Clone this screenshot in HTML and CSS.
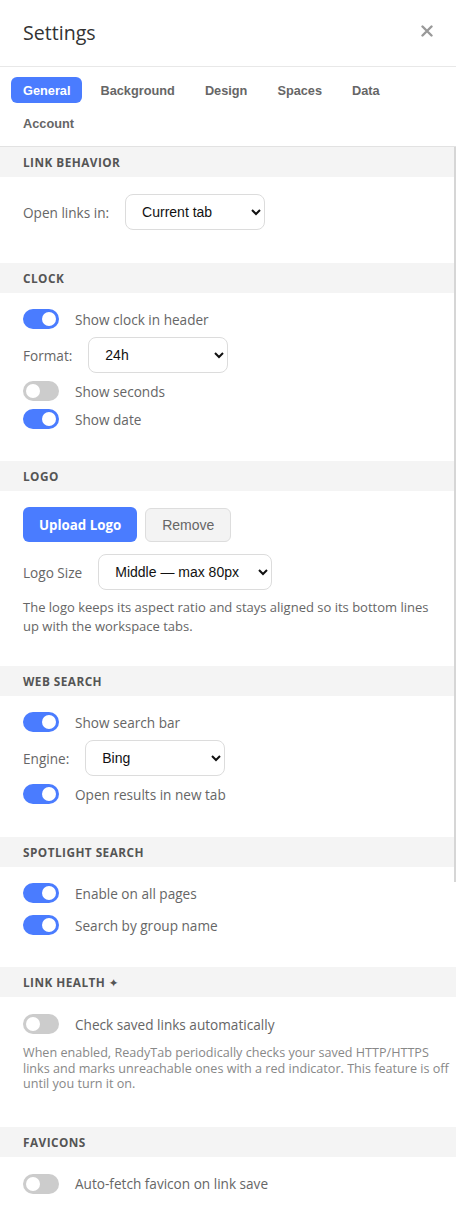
FILE: index.html
```html
<!DOCTYPE html>
<html lang="en">
<head>
<meta charset="utf-8">
<title>Settings</title>
<link rel="stylesheet" href="styles.css">
</head>
<body>
<div class="panel">
  <header class="head">
    <h1 class="title">Settings</h1>
    <button class="close" aria-label="Close">
      <svg width="12" height="12" viewBox="0 0 12 12"><path d="M1.5 1.5 L10.5 10.5 M10.5 1.5 L1.5 10.5" stroke="#999" stroke-width="2.4" stroke-linecap="round" fill="none"/></svg>
    </button>
  </header>

  <nav class="tabs">
    <button class="tab tab--active">General</button>
    <button class="tab">Background</button>
    <button class="tab">Design</button>
    <button class="tab">Spaces</button>
    <button class="tab">Data</button>
    <button class="tab">Account</button>
  </nav>

  <main class="content">
    <section class="sec">
      <h2 class="sec-title">Link Behavior</h2>
      <div class="sec-body sec-body--link">
        <label class="field">
          <span class="field-label">Open links in:</span>
          <select class="select select--std"><option>Current tab</option><option>New tab</option></select>
        </label>
      </div>
    </section>

    <section class="sec">
      <h2 class="sec-title">Clock</h2>
      <div class="sec-body">
        <label class="toggle-row"><span class="toggle toggle--on"></span><span class="toggle-label">Show clock in header</span></label>
        <label class="field">
          <span class="field-label">Format:</span>
          <select class="select select--std"><option>24h</option><option>12h</option></select>
        </label>
        <label class="toggle-row"><span class="toggle"></span><span class="toggle-label">Show seconds</span></label>
        <label class="toggle-row"><span class="toggle toggle--on"></span><span class="toggle-label">Show date</span></label>
      </div>
    </section>

    <section class="sec">
      <h2 class="sec-title">Logo</h2>
      <div class="sec-body sec-body--logo">
        <div class="btn-row">
          <button class="btn btn--primary">Upload Logo</button>
          <button class="btn btn--ghost">Remove</button>
        </div>
        <label class="field field--logo">
          <span class="field-label">Logo Size</span>
          <select class="select select--wide"><option>Middle — max 80px</option></select>
        </label>
        <p class="desc desc--logo">The logo keeps its aspect ratio and stays aligned so its bottom lines<br>up with the workspace tabs.</p>
      </div>
    </section>

    <section class="sec">
      <h2 class="sec-title">Web Search</h2>
      <div class="sec-body sec-body--web">
        <label class="toggle-row"><span class="toggle toggle--on"></span><span class="toggle-label">Show search bar</span></label>
        <label class="field">
          <span class="field-label">Engine:</span>
          <select class="select select--std"><option>Bing</option><option>Google</option></select>
        </label>
        <label class="toggle-row"><span class="toggle toggle--on"></span><span class="toggle-label">Open results in new tab</span></label>
      </div>
    </section>

    <section class="sec">
      <h2 class="sec-title">Spotlight Search</h2>
      <div class="sec-body sec-body--loose">
        <label class="toggle-row"><span class="toggle toggle--on"></span><span class="toggle-label">Enable on all pages</span></label>
        <label class="toggle-row"><span class="toggle toggle--on"></span><span class="toggle-label">Search by group name</span></label>
      </div>
    </section>

    <section class="sec">
      <h2 class="sec-title">Link Health <span class="spark">✦</span></h2>
      <div class="sec-body sec-body--health">
        <label class="toggle-row"><span class="toggle"></span><span class="toggle-label">Check saved links automatically</span></label>
        <p class="desc desc--health">When enabled, ReadyTab periodically checks your saved HTTP/HTTPS<br>links and marks unreachable ones with a red indicator. This feature is off<br>until you turn it on.</p>
      </div>
    </section>

    <section class="sec">
      <h2 class="sec-title">Favicons</h2>
      <div class="sec-body sec-body--fav">
        <label class="toggle-row"><span class="toggle"></span><span class="toggle-label">Auto-fetch favicon on link save</span></label>
      </div>
    </section>
  </main>

  <div class="scroll-thumb"></div>
</div>
</body>
</html>
```

FILE: styles.css
```css
html, body {
  margin: 0;
  padding: 0;
  background: #fff;
}

body {
  font-family: "Open Sans", "Noto Sans", sans-serif;
  color: #333;
}

.panel {
  position: relative;
  width: 456px;
  height: 1220px;
  overflow: hidden;
  background: #fff;
}

/* Header */
.head {
  display: flex;
  align-items: center;
  justify-content: space-between;
  height: 66px;
  padding: 0 23px;
  border-bottom: 1px solid #e8e8e8;
}

.title {
  margin: 0;
  font-size: 19.6px;
  font-weight: 500;
  color: #333;
  line-height: 28px;
}

.close {
  display: flex;
  border: none;
  background: none;
  padding: 0;
  margin-bottom: 5px;
  cursor: pointer;
}

/* Tabs */
.tabs {
  display: flex;
  flex-wrap: wrap;
  gap: 7px 6px;
  padding: 10px 11px;
  border-bottom: 1px solid #e2e2e2;
}

.tab {
  height: 26px;
  padding: 0 12px;
  border: none;
  border-radius: 6px;
  background: transparent;
  font-family: "Liberation Sans", Arial, sans-serif;
  font-size: 12.75px;
  font-weight: 700;
  color: #666;
  cursor: pointer;
}

.tab--active {
  background: #4a7cff;
  color: #fff;
}

/* Sections */
.sec-title {
  margin: 0;
  height: 30px;
  line-height: 31px;
  padding: 0 23px;
  background: #f4f4f4;
  font-size: 11.8px;
  font-weight: 700;
  letter-spacing: 0.45px;
  text-transform: uppercase;
  color: #555;
}

.spark {
  font-family: "DejaVu Sans", sans-serif;
  font-size: 11.5px;
  letter-spacing: 0;
}

.sec-body {
  display: flex;
  flex-direction: column;
  align-items: flex-start;
  gap: 8px;
  padding: 16px 23px 32px;
}

.sec-body--link {
  padding-top: 17px;
  padding-bottom: 33px;
}

.sec-body--web {
  padding-bottom: 33px;
}

.sec-body--loose {
  gap: 12px;
}

.sec-body--logo {
  gap: 0;
  padding-bottom: 31px;
}

.sec-body--health {
  gap: 0;
  padding: 17px 0 35px 23px;
}

.sec-body--fav {
  padding-top: 17px;
}

/* Fields */
.field {
  display: flex;
  align-items: center;
  gap: 16px;
}

.field-label {
  font-size: 13.6px;
  color: #666;
}

.select {
  height: 36px;
  padding: 0 12px;
  border: 1px solid #dcdcdc;
  border-radius: 8px;
  background: #fff;
  font-family: "Liberation Sans", Arial, sans-serif;
  font-size: 14px;
  color: #111;
}

.select--std {
  width: 140px;
}

.select--wide {
  width: 174px;
}

/* Toggles */
.toggle-row {
  display: flex;
  align-items: center;
  gap: 16px;
  height: 20px;
}

.toggle {
  position: relative;
  flex: none;
  width: 36px;
  height: 20px;
  border-radius: 10px;
  background: #cccccc;
}

.toggle::after {
  content: "";
  position: absolute;
  top: 3px;
  left: 3px;
  width: 14px;
  height: 14px;
  border-radius: 50%;
  background: #fff;
}

.toggle--on {
  background: #4a7cff;
}

.toggle--on::after {
  left: 19px;
}

.toggle-label {
  font-size: 13.6px;
  color: #666;
}

/* Logo buttons */
.btn-row {
  display: flex;
  align-items: center;
  gap: 8px;
  margin-bottom: 12px;
}

.btn {
  border-radius: 6px;
  cursor: pointer;
}

.btn--primary {
  height: 35px;
  padding: 0 16px;
  border: none;
  background: #4a7cff;
  color: #fff;
  font-family: "Open Sans", sans-serif;
  font-size: 13.3px;
  font-weight: 700;
}

.btn--ghost {
  height: 34px;
  padding: 0 16px;
  border: 1px solid #dddddd;
  background: #f3f3f3;
  color: #666;
  font-family: "Liberation Sans", Arial, sans-serif;
  font-size: 14px;
}

.field--logo {
  margin-bottom: 8px;
}

/* Descriptions */
.desc {
  margin: 0;
  white-space: nowrap;
}

.desc--logo {
  font-size: 13px;
  line-height: 18.5px;
  color: #666;
}

.desc--health {
  margin-top: 11px;
  font-size: 12.6px;
  line-height: 15.6px;
  color: #888;
}

/* Scrollbar thumb overlay */
.scroll-thumb {
  position: absolute;
  top: 147px;
  right: 0;
  width: 2px;
  height: 735px;
  background: #d6d6d6;
}
```
